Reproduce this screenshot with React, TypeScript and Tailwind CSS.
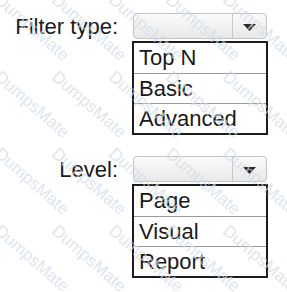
import React from "react";

function Select() {
  return (
    <div className="mx-[1px] flex h-[26px] rounded-[4px] border border-[#c4c4c4] bg-gradient-to-b from-[#fafafa] to-[#e9e9e9]">
      <div className="flex-1 border-r border-[#c8c8c8]" />
      <div className="flex w-[33px] items-center justify-center pt-[2px]">
        <svg width="13" height="7" viewBox="0 0 13 7">
          <polygon points="0,0 13,0 6.5,7" fill="#2a2a2a" />
        </svg>
      </div>
    </div>
  );
}

function List({ items }: { items: string[] }) {
  return (
    <div className="mt-[2px] border-2 border-[#1c1c1c] bg-white">
      {items.map((t, i) => (
        <div
          key={t}
          className={
            "flex h-[30px] items-center pl-[5px] text-[22px] leading-[30px] text-[#1a1a1a] " +
            (i > 0 ? "border-t border-[#9a9a9a]" : "")
          }
        >
          {t}
        </div>
      ))}
    </div>
  );
}

function Field({ label, items }: { label: string; items: string[] }) {
  return (
    <div className="flex">
      <div className="flex h-[26px] w-[118px] items-center justify-end text-[22px] text-[#1a1a1a]">
        {label}
      </div>
      <div className="ml-[14px] w-[136px]">
        <Select />
        <List items={items} />
      </div>
    </div>
  );
}

export default function App() {
  const marks: { x: number; y: number }[] = [];
  for (let r = 0; r < 4; r++) {
    for (let c = 0; c < 5; c++) {
      marks.push({ x: 3 + c * 57, y: -9 + r * 77 });
    }
  }
  return (
    <div
      className="relative h-[292px] w-[287px] overflow-hidden bg-white pt-[13px]"
      style={{ fontFamily: '"Liberation Sans", Arial, sans-serif' }}
    >
      <Field label="Filter type:" items={["Top N", "Basic", "Advanced"]} />
      <div className="mt-[21px]">
        <Field label="Level:" items={["Page", "Visual", "Report"]} />
      </div>
      <div className="pointer-events-none absolute inset-0">
        {marks.map((m, i) => (
          <div
            key={i}
            className="absolute origin-top-left rotate-[41deg] whitespace-nowrap text-[17px] leading-[17px] text-[#d2dce6] opacity-70"
            style={{ left: m.x, top: m.y }}
          >
            DumpsMate
          </div>
        ))}
      </div>
    </div>
  );
}
